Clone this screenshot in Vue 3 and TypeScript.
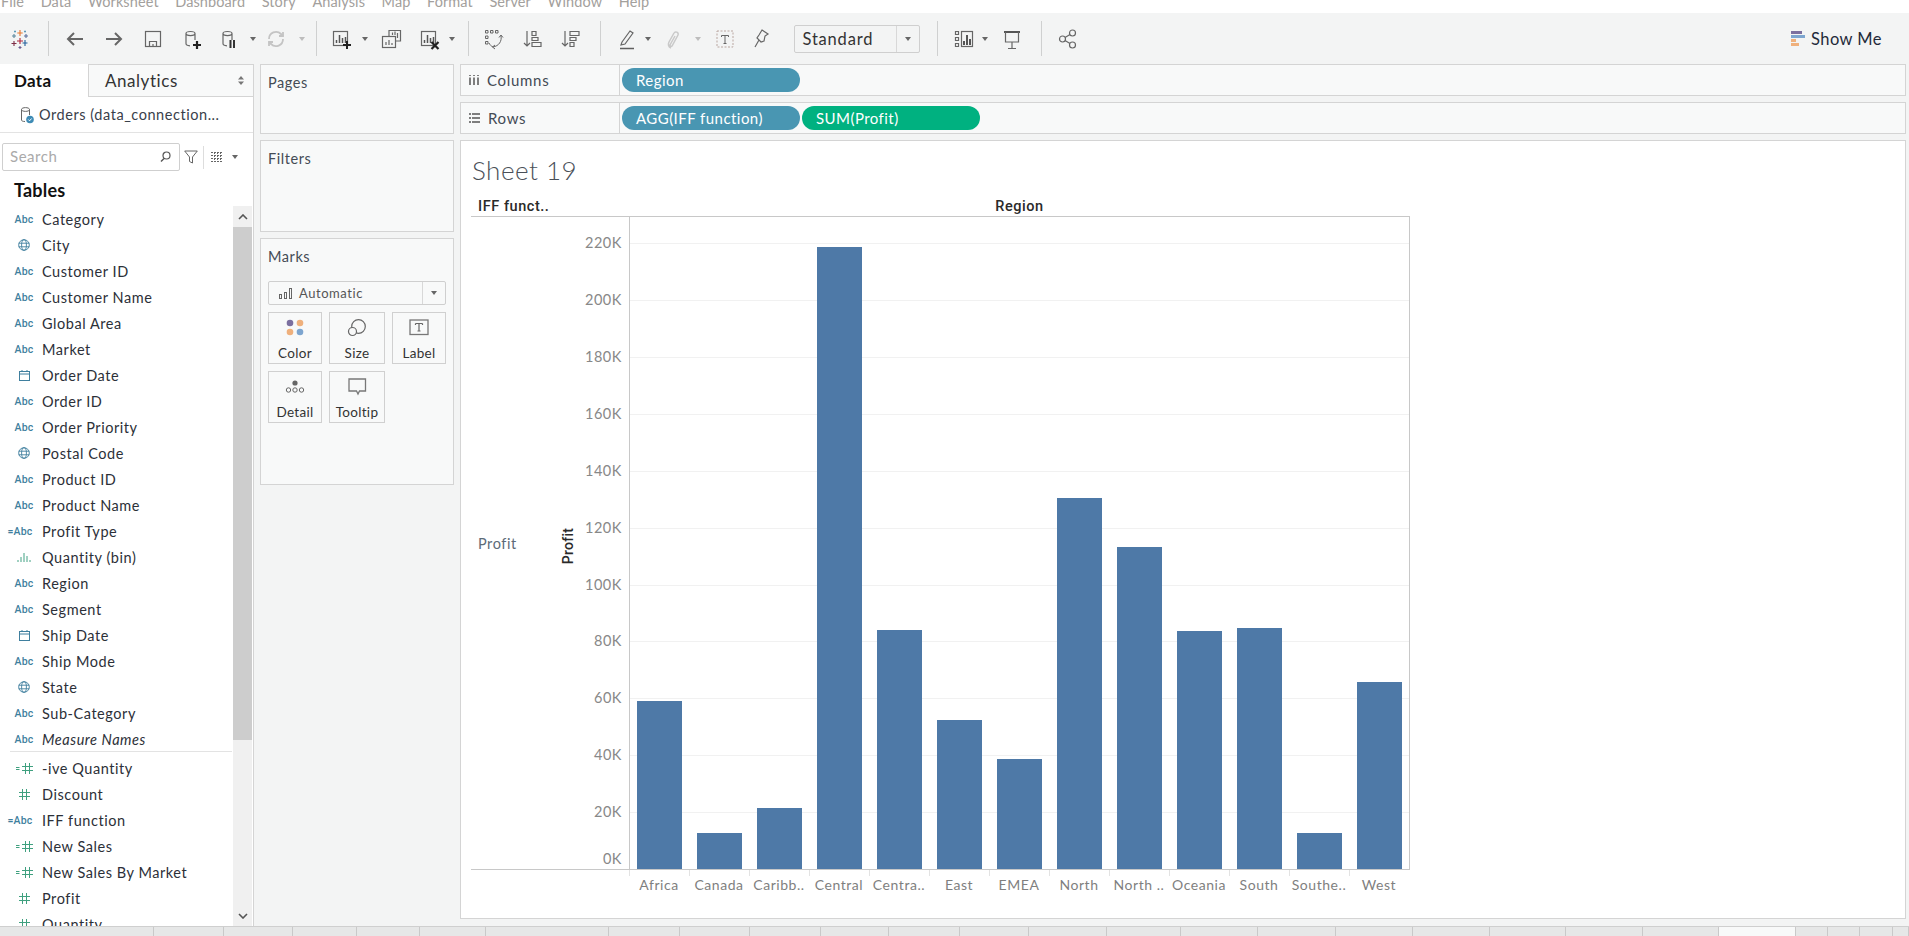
<script setup lang="ts">
const S = 'fill="none" stroke="#666" stroke-width="1.2"'
const cyl = 'M5 5.500C5 2.800 14 2.800 14 5.500V12M5 5.500C5 8.200 14 8.200 14 5.500M5 5.500V15.500C5 17 6.500 17.600 9 17.800'
const chartBars = 'M6.500 15v-3M9.500 15V7M12.500 15v-5M15.500 15V9'

interface Tool { w: number; k: string; p?: string }
const tools: Tool[] = [
  { w: 40, k: 'i', p: `<g stroke-width="1.100" fill="none"><path d="M11 2v6M8.300 5h5.400" stroke="#e8762c"/><path d="M5 6v4M3 8h4" stroke="#5b879b"/><path d="M17 6v4M15 8h4" stroke="#5a6f9e"/><path d="M5 13v5M2.500 15.500h5" stroke="#7d2d45"/><path d="M16 12v6M13.500 15h5" stroke="#1f5f9b"/><path d="M11 10v6M8 13h6" stroke="#b0243a"/><path d="M11 18v3M9.500 19.500h3" stroke="#6b5a8e"/><path d="M6 2.500v2M5 3.500h2M16 2.500v2M15 3.500h2" stroke="#5c9ab8"/></g>` },
  { w: 17, k: 'sep' },
  { w: 36, k: 'i', p: `<path d="M19 11H4M10 5l-6 6 6 6" fill="none" stroke="#666" stroke-width="2"/>` },
  { w: 42, k: 'i', p: `<path d="M3 11h15M12 5l6 6-6 6" fill="none" stroke="#666" stroke-width="2"/>` },
  { w: 36, k: 'i', p: `<g ${S}><rect x="3.500" y="3.500" width="15" height="15"/><path d="M7.500 18.500v-5h7v5M11 16v2.500"/></g>` },
  { w: 42, k: 'i', p: `<path d="${cyl}" ${S}/><path d="M16 13v8M12 17h8" stroke="#222" stroke-width="2.200"/>` },
  { w: 32, k: 'i', p: `<path d="${cyl}" ${S}/><path d="M12.500 12v8M16 12v8" stroke="#333" stroke-width="2"/>` },
  { w: 16, k: 'c' },
  { w: 30, k: 'i', p: `<g fill="none" stroke="#c4c4c4" stroke-width="1.800"><path d="M4 11a7 7 0 0 1 12-5l2 2"/><path d="M18 11a7 7 0 0 1-12 5l-2-2"/><path d="M18 4v4h-4M4 18v-4h4"/></g>` },
  { w: 22, k: 'cg' },
  { w: 6, k: 'sep' },
  { w: 44, k: 'i', p: `<rect x="3.500" y="3.500" width="14" height="14" ${S}/><path d="${chartBars}" stroke="#555" stroke-width="1.500"/><path d="M17 13v8M13 17h8" stroke="#222" stroke-width="2"/>` },
  { w: 4, k: 'c' },
  { w: 47, k: 'i', p: `<g ${S}><path d="M9 8V2.500h11.500V13H16"/><rect x="2.500" y="8.500" width="13" height="11"/></g><path d="M12.500 7V4.500M15 7V3.500M17.500 10V5M6 17v-3M9 17v-5M12 17v-2" stroke="#666" stroke-width="1.200"/>` },
  { w: 29, k: 'i', p: `<rect x="3.500" y="3.500" width="14" height="14" ${S}/><path d="${chartBars}" stroke="#555" stroke-width="1.500"/><path d="M13.500 14l7 7M20.500 14l-7 7" stroke="#222" stroke-width="2.200"/>` },
  { w: 18, k: 'c' },
  { w: 14, k: 'sep' },
  { w: 36, k: 'i', p: `<g fill="none" stroke="#666"><path d="M3.500 2.500h2.500V5H3.500zM8.500 2.500H11V5H8.500zM13.500 2.500H16V5h-2.500zM3.500 8H6v2.500H3.500zM3.500 13.500H6V16H3.500z"/><path d="M19 8c1 5-2 10-8 11M7 15c1 2 2 3 4 4M17 9.500l2-2.500 2 2.500M13 17l-2.500 2 2.500 2"/></g>` },
  { w: 44, k: 'i', p: `<path d="M5 3v15M2 15l3 3 3-3" ${S}/><path d="M10 3.500h4v4h-4zM10 9.500h6v3h-6zM10 14.500h9v4h-9z" ${S}/>` },
  { w: 32, k: 'i', p: `<path d="M5 3v15M2 15l3 3 3-3" ${S}/><path d="M10 3.500h9v4h-9zM10 9.500h6v3h-6zM10 14.500h4v4h-4z" ${S}/>` },
  { w: 26, k: 'sep' },
  { w: 27, k: 'i', p: `<path d="M6 14L14 3l3 2-8 11-4 1z" ${S}/><path d="M4 20.500h14" stroke="#5f5f5f" stroke-width="1.500"/>` },
  { w: 16, k: 'c' },
  { w: 34, k: 'i', p: `<path d="M9 20c-3-1-3-4-2-6l5-9c1-2 5-1 4 2l-6 11c-1 1-2 0-2-1l5-9" fill="none" stroke="#c9c9c9" stroke-width="1.500"/>` },
  { w: 15, k: 'cg' },
  { w: 39, k: 'i', p: `<rect x="3" y="3" width="16" height="16" fill="none" stroke="#b9a6a0" stroke-dasharray="2 1.500"/><path d="M7.500 7.500h7M11 7.500v8M9.500 15.500h3M7.500 7.500v1.500M14.500 7.500v1.500" fill="none" stroke="#666"/>` },
  { w: 34, k: 'i', p: `<path d="M12 2l6 4-3 2-1 5-3 1-4-4 2-3zM9 12l-4 7" ${S}/>` },
  { w: 15.5, k: 'x' },
  { w: 126, k: 'std' },
  { w: 36, k: 'sep' },
  { w: 17, k: 'i', p: `<g ${S}><path d="M2.500 3.500h3v3h-3zM2.500 9.500h3v3h-3zM2.500 15.500h3v3h-3z"/><rect x="8.500" y="3.500" width="11" height="15"/></g><path d="M11 17v-4M14 17V7M17 17v-6" stroke="#555" stroke-width="2"/>` },
  { w: 25, k: 'c' },
  { w: 29, k: 'i', p: `<path d="M3 4h16" stroke="#555" stroke-width="2"/><path d="M4.500 4v10h13V4M11 14v6M7 20.500h8" ${S}/>` },
  { w: 29, k: 'sep' },
  { w: 25, k: 'i', p: `<g ${S}><circle cx="5.500" cy="11" r="3"/><circle cx="15.500" cy="5" r="3"/><circle cx="15.500" cy="17" r="3"/><path d="M8 9.500l5-3M8 12.500l5 3"/></g>` },
]

const menu = ['File', 'Data', 'Worksheet', 'Dashboard', 'Story', 'Analysis', 'Map', 'Format', 'Server', 'Window', 'Help']

const dims: [string, string, boolean?][] = [
  ['abc', 'Category'], ['geo', 'City'], ['abc', 'Customer ID'], ['abc', 'Customer Name'], ['abc', 'Global Area'],
  ['abc', 'Market'], ['date', 'Order Date'], ['abc', 'Order ID'], ['abc', 'Order Priority'], ['geo', 'Postal Code'],
  ['abc', 'Product ID'], ['abc', 'Product Name'], ['cabc', 'Profit Type'], ['bin', 'Quantity (bin)'], ['abc', 'Region'],
  ['abc', 'Segment'], ['date', 'Ship Date'], ['abc', 'Ship Mode'], ['geo', 'State'], ['abc', 'Sub-Category'],
  ['abc', 'Measure Names', true],
]
const meas: [string, string, boolean?][] = [
  ['chash', '-ive Quantity'], ['hash', 'Discount'], ['cabc', 'IFF function'], ['chash', 'New Sales'],
  ['chash', 'New Sales By Market'], ['hash', 'Profit'], ['hash', 'Quantity'],
]

const cards = ['Color', 'Size', 'Label', 'Detail', 'Tooltip']

const PX = 2.845
const ticks = [220, 200, 180, 160, 140, 120, 100, 80, 60, 40, 20, 0]
const bars: { l: string; top: number }[] = [
  { l: 'Africa', top: 701 }, { l: 'Canada', top: 833 }, { l: 'Caribb..', top: 808 }, { l: 'Central', top: 247 },
  { l: 'Centra..', top: 630 }, { l: 'East', top: 720 }, { l: 'EMEA', top: 759 }, { l: 'North', top: 498 },
  { l: 'North ..', top: 547 }, { l: 'Oceania', top: 631 }, { l: 'South', top: 628 }, { l: 'Southe..', top: 833 }, { l: 'West', top: 682 },
]
const barH = (t: number) => `${869 - t}px`
const labelB = (t: number) => `${t === 0 ? 10 : t * PX}px`
const gridB = (t: number) => `${t * PX - 1}px`

const tabs = [154, 70, 69, 64, 63, 66, 123, 71, 70, 71, 68, 71, 69, 78, 74, 77, 78, 77, 77, 76, 77, 76, 77, 32, 32, 33, 16]
</script>

<template>
  <div class="app">
    <div class="menu"><span v-for="m in menu" :key="m">{{ m }}</span></div>

    <div class="toolbar">
      <template v-for="(t, i) in tools" :key="i">
        <div class="tool" :style="{ width: t.w + 'px' }">
          <svg v-if="t.k === 'i'" width="22" height="22" viewBox="0 0 22 22" v-html="t.p"></svg>
          <i v-else-if="t.k === 'sep'" class="sep"></i>
          <i v-else-if="t.k === 'c'" class="caret"></i>
          <i v-else-if="t.k === 'cg'" class="caret grey"></i>
          <div v-else-if="t.k === 'std'" class="std"><span>Standard</span><b><i class="caret"></i></b></div>
        </div>
      </template>
      <div class="showme">
        <svg width="14" height="15" viewBox="0 0 14 15">
          <rect width="11" height="3" fill="#7b6f9f" />
          <rect y="4" width="14" height="3" fill="#7da5cf" />
          <rect y="8" width="5" height="3" fill="#efb07c" />
          <rect y="12" width="8" height="3" fill="#efb07c" />
        </svg>
        <span>Show Me</span>
      </div>
    </div>

    <div class="main">
      <aside class="left">
        <div class="tabs">
          <div class="tab on">Data</div>
          <div class="tab">Analytics<svg width="6" height="9" viewBox="0 0 6 9"><path d="M3 0l3 3.500H0zM3 9L0 5.500h6z" fill="#777" /></svg></div>
        </div>
        <div class="conn">
          <svg width="16" height="18" viewBox="0 0 16 18">
            <path d="M2.500 3.500C2.500 1 10.500 1 10.500 3.500V9M2.500 3.500C2.500 6 10.500 6 10.500 3.500M2.500 3.500V14C2.500 15 4 15.500 6 15.500" fill="none" stroke="#666" />
            <circle cx="11" cy="13.500" r="3.800" fill="#3e8bb5" />
            <path d="M9.300 13.500l1.300 1.300 2-2.300" fill="none" stroke="#fff" />
          </svg>
          <span>Orders (data_connection...</span>
        </div>
        <div class="searchrow">
          <div class="search">
            <span>Search</span>
            <svg width="11" height="11" viewBox="0 0 11 11"><circle cx="6.500" cy="4.500" r="3.500" fill="none" stroke="#555" stroke-width="1.200" /><path d="M4 7.500L1 10.500" stroke="#555" stroke-width="1.400" /></svg>
          </div>
          <svg class="funnel" width="14" height="14" viewBox="0 0 14 14"><path d="M.7 1h12.600L8.500 7v6l-3-1.500V7z" fill="none" stroke="#666" /></svg>
          <i class="vline"></i>
          <svg width="12" height="10" viewBox="0 0 12 10"><path d="M0 .5h12M0 3.500h12M0 6.500h12M0 9.500h12M3.500 0v10M6.500 0v10M9.500 0v10" stroke="#666" stroke-dasharray="2 1" /></svg>
          <i class="caret"></i>
        </div>
        <div class="tables">Tables</div>
        <div class="listwrap">
          <div class="list">
            <template v-for="(group, gi) in [dims, meas]" :key="gi">
              <div class="group" :class="{ measures: gi === 1 }">
                <div v-for="f in group" :key="f[1]" class="field">
                  <span class="ficon">
                    <span v-if="f[0] === 'abc'" class="abc">Abc</span>
                    <span v-else-if="f[0] === 'cabc'" class="abc calc">=Abc</span>
                    <svg v-else-if="f[0] === 'geo'" width="12" height="12" viewBox="0 0 12 12"><g fill="none" stroke="#3f7f9e" stroke-width=".9"><circle cx="6" cy="6" r="5.300" /><ellipse cx="6" cy="6" rx="2.400" ry="5.300" /><path d="M.7 4.200h10.600M.7 7.800h10.600" /></g></svg>
                    <svg v-else-if="f[0] === 'date'" width="11" height="11" viewBox="0 0 11 11"><g fill="none" stroke="#3f7f9e"><rect x=".5" y="1.500" width="10" height="9" /><path d="M.5 4h10M3 0v2M8 0v2" /></g></svg>
                    <svg v-else-if="f[0] === 'bin'" width="14" height="9" viewBox="0 0 14 9"><path d="M1 9V7M4 9V4M7 9V0M10 9V3M13 9V7" stroke="#43a284" /></svg>
                    <svg v-else-if="f[0] === 'hash'" width="11" height="11" viewBox="0 0 11 11"><path d="M3.500 0v11M7.500 0v11M0 3.500h11M0 7.500h11" stroke="#3fa07f" /></svg>
                    <svg v-else width="17" height="11" viewBox="0 0 17 11"><path d="M0 4.500h3.500M0 6.500h3.500M9.500 0v11M13.500 0v11M6 3.500h11M6 7.500h11" stroke="#3fa07f" /></svg>
                  </span>
                  <span class="fname" :class="{ it: f[2] }">{{ f[1] }}</span>
                </div>
              </div>
            </template>
          </div>
          <div class="scroll">
            <div class="sbtn"><svg width="10" height="6" viewBox="0 0 10 6"><path d="M1 5l4-4 4 4" fill="none" stroke="#555" stroke-width="1.600" /></svg></div>
            <div class="thumb"></div>
            <div class="track"></div>
            <div class="sbtn"><svg width="10" height="6" viewBox="0 0 10 6"><path d="M1 1l4 4 4-4" fill="none" stroke="#555" stroke-width="1.600" /></svg></div>
          </div>
        </div>
      </aside>

      <div class="mid">
        <section class="card pages">Pages</section>
        <section class="card filters">Filters</section>
        <section class="card marks">
          <div>Marks</div>
          <div class="msel">
            <svg width="13" height="11" viewBox="0 0 13 11"><g fill="none" stroke="#666"><rect x=".5" y="6.500" width="2" height="4" /><rect x="5.500" y="4.500" width="2" height="6" /><rect x="10.500" y=".5" width="2" height="10" /></g></svg>
            <span>Automatic</span>
            <b><i class="caret"></i></b>
          </div>
          <div class="mgrid">
            <div v-for="c in cards" :key="c" class="mcard">
              <svg width="20" height="18" viewBox="0 0 20 18">
                <template v-if="c === 'Color'">
                  <circle cx="5" cy="4" r="3.300" fill="#7b6f9f" /><circle cx="15" cy="4" r="3.300" fill="#efb07c" />
                  <circle cx="5" cy="13" r="3.300" fill="#efb07c" /><circle cx="15" cy="13" r="3.300" fill="#7da5cf" />
                </template>
                <template v-else-if="c === 'Size'">
                  <circle cx="11.500" cy="7.500" r="6.800" fill="none" stroke="#666" stroke-width="1.200" />
                  <circle cx="5.500" cy="12.500" r="4" fill="#f8f9f9" stroke="#666" stroke-width="1.200" />
                </template>
                <template v-else-if="c === 'Label'">
                  <rect x="1" y="1" width="18" height="14.500" fill="none" stroke="#777" stroke-width="1.300" />
                  <path d="M6.500 4.500h7M10 4.500v7.500M8.500 12h3M6.500 4.500V6M13.500 4.500V6" fill="none" stroke="#666" stroke-width="1.200" />
                </template>
                <template v-else-if="c === 'Detail'">
                  <circle cx="10" cy="5" r="2.600" fill="#666" />
                  <circle cx="3.500" cy="12" r="2.200" fill="none" stroke="#666" /><circle cx="10" cy="12" r="2.200" fill="none" stroke="#666" /><circle cx="16.500" cy="12" r="2.200" fill="none" stroke="#666" />
                </template>
                <path v-else d="M2 1h16.500v12h-6l-1.500 3-1.500-3H2z" fill="none" stroke="#777" stroke-width="1.300" />
              </svg>
              <span>{{ c }}</span>
            </div>
          </div>
        </section>
      </div>

      <div class="right">
        <div class="shelf">
          <div class="slabel">
            <svg width="10" height="10" viewBox="0 0 10 10"><path d="M1 0v1M5 0v1M9 0v1M1 2.500V10M5 2.500V10M9 2.500V10" stroke="#555" stroke-width="1.500" /></svg>
            <span>Columns</span>
          </div>
          <div class="pills"><div class="pill blue">Region</div></div>
        </div>
        <div class="shelf">
          <div class="slabel">
            <svg width="11" height="10" viewBox="0 0 11 10"><path d="M0 1h2M0 5h2M0 9h2M3 1h8M3 5h8M3 9h8" stroke="#555" stroke-width="1.500" /></svg>
            <span>Rows</span>
          </div>
          <div class="pills">
            <div class="pill blue">AGG(IFF function)</div>
            <div class="pill green">SUM(Profit)</div>
          </div>
        </div>

        <section class="canvas">
          <h1>Sheet 19</h1>
          <div class="chart">
            <div class="chead">
              <div class="hleft">IFF funct..</div>
              <div class="hright">Region</div>
            </div>
            <div class="cbody">
              <div class="rowlabel">Profit</div>
              <div class="ytitle"><span>Profit</span></div>
              <div class="yaxis">
                <span v-for="t in ticks" :key="t" class="ylab" :style="{ bottom: labelB(t) }">{{ t }}K</span>
              </div>
              <div class="plot">
                <i v-for="t in ticks.slice(0, -1)" :key="t" class="grid" :style="{ bottom: gridB(t) }"></i>
                <div class="bars">
                  <div v-for="b in bars" :key="b.l" class="slot"><div class="bar" :style="{ height: barH(b.top) }"></div></div>
                </div>
              </div>
            </div>
            <div class="xaxis">
              <div class="xpad"></div>
              <div v-for="b in bars" :key="b.l" class="xlab">{{ b.l }}</div>
            </div>
          </div>
        </section>
      </div>
    </div>

    <div class="sheets">
      <i v-for="(w, i) in tabs" :key="i" class="stab" :class="{ active: i === 22 }" :style="{ width: w + 'px' }"></i>
    </div>
  </div>
</template>

<style>
html, body { margin: 0; padding: 0; overflow: hidden; }
</style>

<style scoped>
.app {
  width: 1909px; height: 936px; display: flex; flex-direction: column; overflow: hidden;
  background: #f3f4f4; color: #2c3038; letter-spacing: .55px;
  font-family: Lato, "Liberation Sans", sans-serif; font-size: 14px;
}
.menu {
  height: 13px; flex: none; background: #fff; overflow: hidden; display: flex; gap: 16.5px;
  color: #a3a09c; font-size: 14.5px; line-height: 14px; padding-left: 1px; letter-spacing: .1px;
}
.menu span { transform: translateY(-5px); }
.toolbar { height: 51px; flex: none; display: flex; align-items: center; }
.tool { height: 100%; display: flex; align-items: center; justify-content: center; flex: none; }
.tool svg { flex: none; overflow: visible; }
.sep { display: block; width: 1px; height: 35px; background: #cfd0d0; }
.caret { display: block; flex: none; width: 0; height: 0; border-left: 3.5px solid transparent; border-right: 3.5px solid transparent; border-top: 4px solid #666; }
.caret.grey { border-top-color: #bdbdbd; }
.std { width: 100%; height: 28px; box-sizing: border-box; border: 1px solid #cfcfcf; border-radius: 2px; display: flex; align-items: center; font-size: 16.5px; color: #333; letter-spacing: .8px; }
.std span { flex: 1; padding-left: 8px; }
.std b { width: 22px; height: 100%; border-left: 1px solid #d8d8d8; display: flex; align-items: center; justify-content: center; }
.showme { margin-left: auto; margin-right: 27px; display: flex; align-items: center; gap: 6px; font-size: 16.5px; color: #1f2a3a; letter-spacing: .45px; }

.main { flex: 1; min-height: 0; display: flex; }
.left { width: 254px; flex: none; background: #fff; border-right: 1px solid #d4d4d4; box-sizing: border-box; display: flex; flex-direction: column; height: 100%; }
.tabs { height: 33px; flex: none; display: flex; }
.tab { display: flex; align-items: center; box-sizing: border-box; font-size: 17px; }
.tab.on { width: 89px; padding-left: 14px; font-weight: 700; color: #111; background: #fff; border-right: 1px solid #d4d4d4; letter-spacing: .3px; }
.tab:not(.on) { flex: 1; justify-content: space-between; padding: 0 9px 0 16px; background: #f8f9f9; border-bottom: 1px solid #d4d4d4; border-top: 1px solid #d4d4d4; color: #333; }
.conn { height: 36px; flex: none; box-sizing: border-box; border-bottom: 1px solid #e3e3e3; display: flex; align-items: center; padding-left: 19px; gap: 4px; font-size: 14.5px; color: #39404a; }
.searchrow { height: 28px; flex: none; margin-top: 10px; padding-left: 2px; display: flex; align-items: center; }
.search { width: 178px; height: 28px; box-sizing: border-box; border: 1px solid #cfcfcf; border-radius: 2px; display: flex; align-items: center; justify-content: space-between; padding: 0 8px 2px 7px; color: #aaa; font-size: 15px; }
.funnel { margin-left: 4px; }
.vline { display: block; width: 1px; height: 23px; background: #ddd; margin: 0 7px 0 5px; }
.searchrow .caret { margin-left: 9px; }
.tables { height: 35px; flex: none; padding-left: 14px; font-weight: 700; font-size: 18px; letter-spacing: .2px; color: #111; display: flex; align-items: center; box-sizing: border-box; padding-top: 3px; }
.listwrap { flex: 1; min-height: 0; display: flex; }
.list { flex: none; width: 233px; overflow: hidden; margin-top: -1px; }
.group { padding-top: 1px; }
.group.measures { margin: 0 1px 0 10px; padding-top: 3px; border-top: 1px solid #e3e3e3; margin-top: -1px; }
.group.measures .field { margin-left: -10px; }
.field { height: 26px; display: flex; align-items: center; color: #2c3038; }
.ficon { width: 42px; flex: none; display: flex; justify-content: center; align-items: center; padding-left: 6px; box-sizing: border-box; }
.abc { font-family: Roboto, sans-serif; font-size: 10.5px; color: #3f7f9e; font-weight: 500; letter-spacing: .2px; }
.abc.calc { margin-left: -8px; }
.fname { font-size: 14.5px; white-space: nowrap; }
.fname.it { font-style: italic; }
.scroll { width: 19px; flex: none; display: flex; flex-direction: column; background: #f0f0f0; }
.sbtn { height: 21px; flex: none; display: flex; align-items: center; justify-content: center; }
.thumb { height: 513px; flex: none; background: #cdcdcd; }
.track { flex: 1; }

.mid { width: 194px; flex: none; margin-left: 6px; display: flex; flex-direction: column; gap: 6px; }
.card { box-sizing: border-box; background: #f8f9f9; border: 1px solid #d4d4d4; padding: 9px 7px 7px; font-size: 14.5px; color: #444b55; }
.pages { height: 70px; }
.filters { height: 92px; }
.marks { height: 247px; }
.msel { margin-top: 16px; height: 24px; box-sizing: border-box; border: 1px solid #cfcfcf; border-radius: 2px; display: flex; align-items: center; padding-left: 10px; gap: 7px; font-size: 13px; color: #555; }
.msel span { flex: 1; }
.msel b { width: 22px; height: 100%; border-left: 1px solid #d8d8d8; display: flex; align-items: center; justify-content: center; }
.mgrid { margin-top: 7px; display: grid; grid-template-columns: 54px 56px 54px; gap: 7px; }
.mcard { height: 52px; box-sizing: border-box; border: 1px solid #d0d0d0; display: flex; flex-direction: column; align-items: center; padding-top: 6px; gap: 8px; font-size: 13.5px; line-height: 16px; color: #333; letter-spacing: .3px; }

.right { width: 1446px; flex: none; margin-left: 6px; display: flex; flex-direction: column; gap: 6px; padding-bottom: 7px; box-sizing: border-box; height: 100%; }
.shelf { height: 32px; flex: none; box-sizing: border-box; background: #f8f9f9; border: 1px solid #d4d4d4; display: flex; }
.slabel { width: 159px; flex: none; box-sizing: border-box; border-right: 1px solid #d4d4d4; display: flex; align-items: center; padding-left: 8px; gap: 8px; font-size: 15px; color: #444b55; letter-spacing: .7px; }
.pills { display: flex; align-items: center; gap: 2px; padding-left: 2px; }
.pill { width: 178px; height: 24px; box-sizing: border-box; border-radius: 12px; padding-left: 14px; display: flex; align-items: center; color: #fff; font-size: 15px; letter-spacing: .45px; }
.blue { background: #4996b2; }
.green { background: #00b180; }

.canvas { flex: 1; min-height: 0; background: #fff; border: 1px solid #d4d4d4; box-sizing: border-box; }
h1 { margin: 0; height: 46px; box-sizing: border-box; padding: 12px 0 0 11px; font-size: 26px; line-height: 34px; font-weight: 300; color: #4a5058; letter-spacing: .5px; }
.chart { width: 939px; margin-left: 10px; }
.chead { height: 30px; box-sizing: border-box; padding-top: 9px; border-bottom: 1px solid #c8c8c8; display: flex; align-items: center; font-size: 14.5px; color: #2a2a2a; font-family: Roboto, sans-serif; font-weight: 500; letter-spacing: .55px; }
.hleft { width: 158px; padding-left: 7px; box-sizing: border-box; }
.hright { flex: 1; text-align: center; }
.cbody { height: 652px; display: flex; border-bottom: 1px solid #c8c8c8; }
.rowlabel { width: 87px; flex: none; box-sizing: border-box; padding: 318px 0 0 7px; color: #5d6b78; font-size: 14.5px; }
.ytitle { width: 20px; flex: none; display: flex; align-items: center; justify-content: center; padding-top: 6px; box-sizing: border-box; }
.ytitle span { transform: rotate(-90deg); font-weight: 500; font-size: 14px; color: #2a2a2a; font-family: Roboto, sans-serif; letter-spacing: .3px; }
.yaxis { width: 51px; flex: none; position: relative; }
.ylab { position: absolute; right: 7px; transform: translateY(50%); font-size: 14.5px; line-height: 16px; color: #888; }
.plot { flex: 1; position: relative; border-left: 1px solid #c8c8c8; border-right: 1px solid #c8c8c8; }
.grid { position: absolute; left: 0; right: 0; height: 1px; background: #f1f1f1; }
.bars { position: absolute; inset: 0 0 0 -1px; display: flex; }
.slot { width: 60px; flex: none; display: flex; align-items: flex-end; justify-content: center; }
.bar { width: 45px; background: #4e79a7; }
.xaxis { display: flex; height: 30px; color: #7f7f7f; font-size: 14px; }
.xpad { width: 158px; flex: none; }
.xlab { width: 60px; flex: none; text-align: center; padding-top: 6px; box-sizing: border-box; white-space: nowrap; position: relative; }
.xlab::before { content: ""; position: absolute; left: 0; top: 0; width: 1px; height: 6px; background: #e3e3e3; }

.sheets { height: 10px; flex: none; box-sizing: border-box; border-top: 1px solid #cfcfcf; background: #e6e7e7; display: flex; }
.stab { display: block; height: 100%; box-sizing: border-box; border-right: 1px solid #c9c9c9; flex: none; }
.stab.active { background: #f8f9f9; }
</style>
